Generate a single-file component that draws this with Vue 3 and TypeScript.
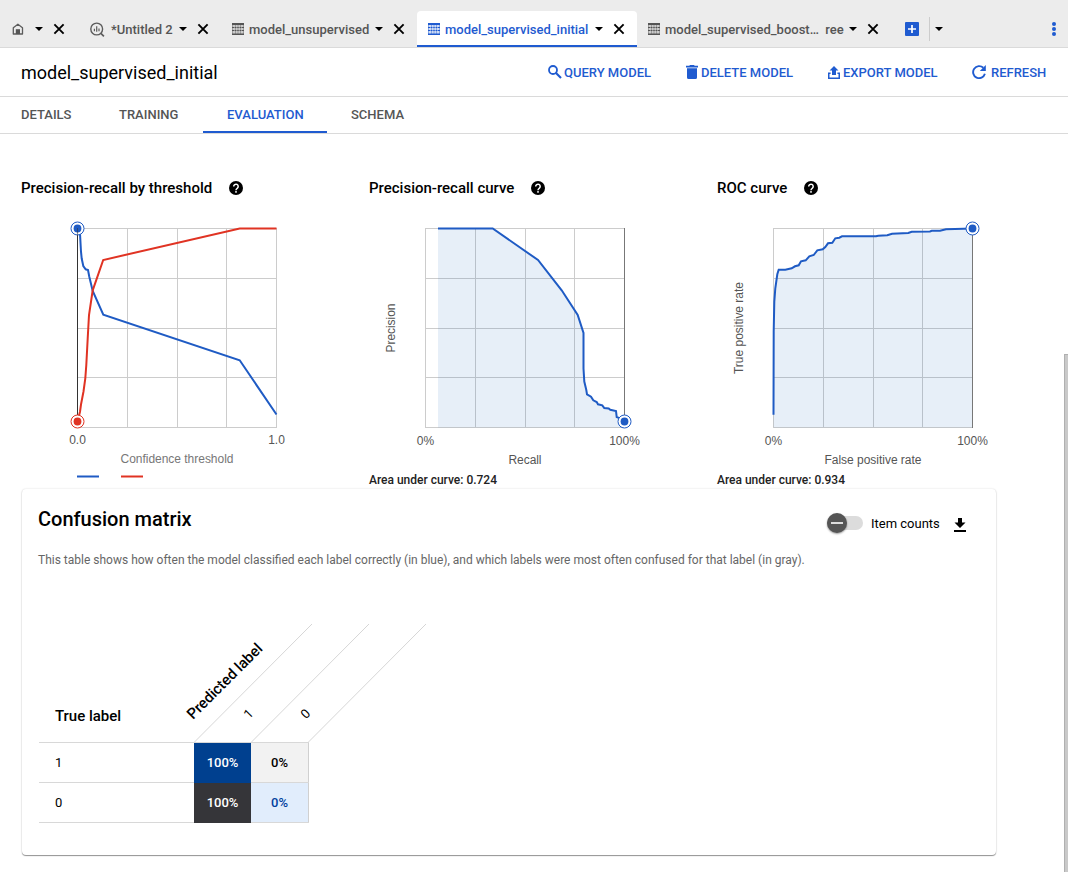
<script setup lang="ts">
interface Tab { kind: string; label: string; width: number; active?: boolean }
interface Marker { x: number; y: number; color: string }
interface Line { color: string; points: string }
interface Chart {
  title: string; x: number; axisX: number; lines: Line[]; area?: string; markers: Marker[]
  min: string; max: string; xLabel: string; xWidth: number; yLabel?: string; yWidth?: number; auc?: string
}

const blue = '#1f5bc4'
const red = '#e03323'

const tabs: Tab[] = [
  { kind: 'home', label: '', width: 77 },
  { kind: 'query', label: '*Untitled 2', width: 144 },
  { kind: 'model', label: 'model_unsupervised', width: 196 },
  { kind: 'model', label: 'model_supervised_initial', width: 220, active: true },
  { kind: 'model', label: 'model_supervised_boost…\u00a0 ree', width: 254 },
]

const views = ['DETAILS', 'TRAINING', 'EVALUATION', 'SCHEMA']

const recallCurve = '438,228.5 492.7,228.5 538,260 561.7,290.3 577.7,315 583.5,333 583.5,368.5 584.3,381.5 586.3,390 587,394.3 591,396.7 593.3,400.3 596.7,402 598,404.3 602.3,405.3 604.3,408 608.7,408.5 610.3,409.7 616,411 616.7,417 618.7,417.8 624.5,421.5'
const rocCurve = '773.5,414.7 773.7,331.7 774.3,301.7 775.3,288.3 777.3,274.3 778.7,269.7 785.3,269.7 791.7,268.3 795,266.3 798.7,265.3 801,261.3 805.7,260.3 809.3,256.3 813.7,255 817.3,250.3 822.7,249.3 825.3,247 828,243.3 832.3,242.7 835.3,238.3 839.3,237.7 842,236.3 876,236.3 878.3,235.7 887.3,235.3 892,233.7 908.3,233 911.7,231.7 930,231.5 931.7,230.8 940,230.8 946,229.3 955,229 972.5,228.5'

const charts: Chart[] = [
  {
    title: 'Precision-recall by threshold', x: 21, axisX: 77.5,
    lines: [
      { color: blue, points: '77.5,228.5 80,233.5 81,251.7 81.7,258.5 83.3,266 85.7,269.3 88,270 89.3,276.7 92.7,291 103.3,314.7 239.7,360.3 276.5,414.5' },
      { color: red, points: '77.5,421.5 80,411.7 81,404.5 83.5,391.5 85.3,378.3 86.3,365 87.7,338.5 89,315 92.7,290.3 103.2,260 239.7,228.5 276.5,228.5' },
    ],
    markers: [{ x: 77.5, y: 228.5, color: blue }, { x: 77.5, y: 421.5, color: red }],
    min: '0.0', max: '1.0', xLabel: 'Confidence threshold', xWidth: 113,
  },
  {
    title: 'Precision-recall curve', x: 369, axisX: 624.5,
    lines: [{ color: blue, points: recallCurve }],
    area: `438,427.5 ${recallCurve} 624.5,427.5`,
    markers: [{ x: 624.5, y: 421.5, color: blue }],
    min: '0%', max: '100%', xLabel: 'Recall', xWidth: 33, yLabel: 'Precision', yWidth: 49, auc: '0.724',
  },
  {
    title: 'ROC curve', x: 717, axisX: 972.5,
    lines: [{ color: blue, points: rocCurve }],
    area: `773.5,427.5 ${rocCurve} 972.5,427.5`,
    markers: [{ x: 972.5, y: 228.5, color: blue }],
    min: '0%', max: '100%', xLabel: 'False positive rate', xWidth: 97, yLabel: 'True positive rate', yWidth: 92, auc: '0.934',
  },
]

const gridX = [0, 50, 100, 149, 199]
const gridY = [228.5, 278.5, 328.5, 377.5, 427.5]

const rows = [
  { label: '1', cells: [{ text: '100%', tone: 'navy' }, { text: '0%', tone: 'pale' }] },
  { label: '0', cells: [{ text: '100%', tone: 'dark' }, { text: '0%', tone: 'sky' }] },
]
</script>

<template>
  <div class="page">
    <nav class="tabbar">
      <div v-for="(tab, i) in tabs" :key="i" class="tab" :class="[tab.kind, { active: tab.active }]" :style="{ width: tab.width + 'px' }">
        <svg v-if="tab.kind === 'home'" width="12" height="12" viewBox="0 0 12 12">
          <path d="M1.3 11V4.8L5.9 1.2l4.6 3.6V11z" fill="none" stroke="#5c5c5c" stroke-width="1.3" stroke-linejoin="round" />
          <path d="M3.8 11V6.2h4.2V11z" fill="#555" />
        </svg>
        <svg v-else-if="tab.kind === 'query'" width="15" height="15" viewBox="0 0 15 15" fill="none" stroke="#5c5c5c">
          <circle cx="6.7" cy="7" r="5.9" stroke-width="1.4" />
          <path d="M4.4 6.8v2.4M6.7 4.2v5.6M9 6.6v2.6" stroke-width="1.2" />
          <path d="M10.9 11.3l3 3" stroke-width="1.7" />
        </svg>
        <svg v-else width="12" height="12" viewBox="0 0 12 12" fill="currentColor">
          <path d="M0 0h12v2H0zM0 11h12v1H0z" />
          <path d="M0 2h12v9H0z" opacity=".22" />
          <path d="M0 4h12v1H0zM0 7h12v1H0zM0 10h12v1H0z" opacity=".5" />
          <path d="M0 4h2v1H0zM3 4h1v1H3zM5.5 4h1v1h-1zM8 4h1v1H8zM10 4h2v1h-2zM0 7h2v1H0zM3 7h1v1H3zM5.5 7h1v1h-1zM8 7h1v1H8zM10 7h2v1h-2z" />
          <path d="M0 2h1v9H0zM11 2h1v9h-1zM3 2h1v9H3zM5.5 2h1v9h-1zM8 2h1v9H8z" opacity=".4" />
        </svg>
        <span v-if="tab.label" class="tab-label">{{ tab.label }}</span>
        <span class="slot"><i class="caret" /></span>
        <span class="slot">
          <svg width="12" height="12" viewBox="0 0 12 12"><path d="M1.4 1.4l9.2 9.2M10.6 1.4l-9.2 9.2" stroke="#000" stroke-width="1.9" /></svg>
        </span>
      </div>
      <svg class="plus" width="14" height="14" viewBox="0 0 14 14">
        <rect width="14" height="14" rx="1" fill="#1f5bd0" />
        <path d="M7 3v8M3 7h8" stroke="#fff" stroke-width="1.7" />
      </svg>
      <span class="divider" />
      <i class="caret" />
      <svg class="dots" width="4" height="14" viewBox="0 0 4 14" fill="#1f5bd0">
        <circle cx="2" cy="2" r="2" /><circle cx="2" cy="7" r="2" /><circle cx="2" cy="12" r="2" />
      </svg>
    </nav>

    <header class="titlebar">
      <h1>model_supervised_initial</h1>
      <div class="actions">
        <button class="query-btn">
          <svg width="14" height="14" viewBox="0 0 14 14" fill="none" stroke="currentColor"><circle cx="5" cy="5" r="4" stroke-width="1.8" /><path d="M8 8l5 5" stroke-width="2.1" /></svg>
          <span>QUERY MODEL</span>
        </button>
        <button class="delete-btn">
          <svg width="12" height="14" viewBox="0 0 12 14" fill="currentColor"><path d="M0 .8h3.3L4 0h4l.7.8H12v1.6H0zM1 3.2h10v9.3Q11 14 9.5 14h-7Q1 14 1 12.5z" /></svg>
          <span>DELETE MODEL</span>
        </button>
        <button class="export-btn">
          <svg width="12" height="13" viewBox="0 0 12 13" fill="currentColor"><path d="M6 0l4.5 4.5H8V9H4V4.5H1.5zM0 6.5h2.6V8H1.5v3.5h9V8H9.4V6.5H12V13H0z" /></svg>
          <span>EXPORT MODEL</span>
        </button>
        <button class="refresh-btn">
          <svg width="14" height="14" viewBox="0 0 14 14" fill="none"><path d="M11.3 2.8A6 6 0 1 0 12.9 8.8" stroke="currentColor" stroke-width="1.9" /><path d="M13.8 0v6H7.8z" fill="currentColor" /></svg>
          <span>REFRESH</span>
        </button>
      </div>
    </header>

    <nav class="views">
      <a v-for="v in views" :key="v" :class="[v.toLowerCase(), { on: v === 'EVALUATION' }]"><span>{{ v }}</span></a>
    </nav>

    <div class="body">
      <main>
        <section class="charts">
          <article v-for="(c, i) in charts" :key="c.title">
            <h2>
              <span>{{ c.title }}</span>
              <svg width="14" height="14" viewBox="0 0 14 14">
                <circle cx="7" cy="7" r="7" />
                <path d="M4.7 5.5a2.25 2.25 0 1 1 3.5 1.8Q7 8.1 7 9.2" fill="none" stroke="#fff" stroke-width="1.5" />
                <rect x="6.2" y="10.1" width="1.6" height="1.6" fill="#fff" />
              </svg>
            </h2>
            <svg class="plot" width="348" height="291" :viewBox="`${c.x} 198 348 291`">
              <g stroke="#ccc" stroke-width="1">
                <line v-for="g in gridX" :key="g" :x1="c.x + 56.5 + g" :x2="c.x + 56.5 + g" y1="228" y2="428" />
                <line v-for="g in gridY" :key="g" :x1="c.x + 56" :x2="c.x + 256" :y1="g" :y2="g" />
              </g>
              <polygon v-if="c.area" :points="c.area" fill="#246bc0" fill-opacity=".11" />
              <polyline v-for="l in c.lines" :key="l.color" :points="l.points" fill="none" :stroke="l.color" stroke-width="2" />
              <line :x1="c.axisX" :x2="c.axisX" y1="228" :y2="i === 0 ? 422 : 428" :stroke="i === 0 ? '#333' : '#777'" />
              <g v-for="m in c.markers" :key="m.color">
                <circle :cx="m.x" :cy="m.y" r="6.5" fill="#fff" :stroke="m.color" stroke-width="1" />
                <circle :cx="m.x" :cy="m.y" r="3.9" :fill="m.color" />
              </g>
              <line v-if="i === 0" x1="77.5" x2="77.5" y1="228" y2="236" stroke="#333" stroke-opacity=".55" />
              <g class="axis" text-anchor="middle">
                <text :x="c.x + 56.5" :y="i === 0 ? 444 : 445">{{ c.min }}</text>
                <text :x="c.x + 255.5" :y="i === 0 ? 444 : 445">{{ c.max }}</text>
                <text :x="c.x + 156" :y="i === 0 ? 463 : 464" :textLength="c.xWidth" :class="{ light: i === 0 }">{{ c.xLabel }}</text>
                <text v-if="c.yLabel" :transform="`translate(${c.x + 26} 328) rotate(-90)`" :textLength="c.yWidth">{{ c.yLabel }}</text>
              </g>
              <g v-if="i === 0" stroke-width="2">
                <line x1="77" x2="99" y1="476.5" y2="476.5" :stroke="blue" />
                <line x1="121" x2="143" y1="476.5" y2="476.5" :stroke="red" />
              </g>
              <text v-if="c.auc" class="auc" :x="c.x" y="484" textLength="128">Area under curve: {{ c.auc }}</text>
            </svg>
          </article>
        </section>

        <section class="card">
          <div class="card-head">
            <h3>Confusion matrix</h3>
            <div class="toggle"><span class="knob" /></div>
            <span class="counts">Item counts</span>
            <svg class="download" width="12" height="14" viewBox="0 0 12 14"><path d="M4 0h4v4.5h3.5L6 10 .5 4.5H4zM0 12h12v2H0z" /></svg>
          </div>
          <p>This table shows how often the model classified each label correctly (in blue), and which labels were most often confused for that label (in gray).</p>
          <div class="matrix">
            <svg width="400" height="119" viewBox="39 624 400 119">
              <path d="M194 742.5L312 624M251 742.5L369 624M308 742.5L426 624" stroke="#d6d6d6" />
              <text class="head" x="55" y="721" textLength="66">True label</text>
              <text class="head" transform="translate(193 720) rotate(-45)" textLength="99.5">Predicted label</text>
              <text class="col" transform="translate(249 719.5) rotate(-45)">1</text>
              <text class="col" transform="translate(306 719.5) rotate(-45)">0</text>
            </svg>
            <div v-for="r in rows" :key="r.label" class="row">
              <span class="row-label">{{ r.label }}</span>
              <span v-for="(cell, i) in r.cells" :key="i" class="cell" :class="cell.tone">{{ cell.text }}</span>
            </div>
          </div>
        </section>
      </main>
      <div class="rail"><div class="thumb" /></div>
    </div>
  </div>
</template>

<style>
html, body { background: #fff; overflow: hidden; }
</style>

<style scoped>
* { box-sizing: border-box; }
.page { width: 1068px; height: 872px; overflow: hidden; display: flex; flex-direction: column; font-family: Roboto, "Liberation Sans", sans-serif; color: #000; background: #fff; }
svg { display: block; flex: none; }
.tabbar { height: 48px; flex: none; display: flex; align-items: center; background: #ececec; border-bottom: 1px solid #dadada; padding-top: 11px; }
.tab { height: 36px; flex: none; display: flex; align-items: center; padding: 0 8px 0 11px; color: #555; border-radius: 4px 4px 0 0; }
.tab.home { padding-left: 12px; }
.home .slot:nth-of-type(1) { margin-left: 5px; }
.tab.query { padding-left: 13px; }
.tab.active { background: #fff; color: #1f5bd0; border-bottom: 2px solid #1f5bd0; padding-top: 2px; }
.tab-label { flex: 1; min-width: 0; margin-left: 5px; font-size: 13px; font-weight: 500; white-space: nowrap; }
.query .tab-label { margin-left: 6px; }
.slot { width: 20px; flex: none; display: flex; justify-content: center; }
.caret { width: 0; height: 0; border: 4px solid transparent; border-top-color: #000; border-bottom: 0; }
.plus { margin-left: 14px; }
.divider { width: 1px; height: 24px; margin: 0 5px 0 10px; background: #ccc; }
.dots { margin-left: auto; margin-right: 12px; }
.titlebar { height: 49px; flex: none; border-bottom: 1px solid #dadada; display: flex; align-items: center; justify-content: space-between; padding: 0 22px 0 21px; }
h1 { margin: 0; font-size: 18px; font-weight: 400; }
.actions { display: flex; }
button { border: 0; padding: 0; background: none; display: flex; align-items: center; color: #1f5bd0; font: 500 13px Roboto, sans-serif; white-space: nowrap; text-align: left; }
.query-btn { width: 138px; gap: 2px; }
.delete-btn { width: 142px; gap: 3px; }
.export-btn { width: 144px; gap: 3px; }
.refresh-btn { width: 74px; gap: 5px; }
.views { height: 37px; flex: none; display: flex; border-bottom: 1px solid #dadada; }
.views a { padding: 10px 24px 0; height: 36px; font-size: 13px; font-weight: 500; line-height: 16px; color: #555; white-space: nowrap; }
.views .details { width: 95px; padding-left: 21px; }
.views .training { width: 108px; }
.views .evaluation { width: 124px; }
.views a.on { color: #1f5bd0; border-bottom: 2px solid #1f5bd0; }
.body { flex: 1; display: flex; min-height: 0; }
main { flex: 1; padding: 44px 0 0 21px; }
.charts { display: grid; grid-template-columns: repeat(3, 348px); width: 1040px; }
h2 { margin: 0; height: 20px; display: flex; align-items: center; gap: 17px; font-size: 15px; font-weight: 500; line-height: 20px; white-space: nowrap; }
.plot { overflow: visible; }
.axis text { font: 12px "Liberation Sans", Arial, sans-serif; fill: #555; }
.axis text.light { fill: #777; }
.auc { font-size: 12px; font-weight: 500; fill: #222; }
.card { width: 974px; height: 366px; margin-left: 1px; border-radius: 4px; padding: 17px 30px 0 16px; background: #fff; box-shadow: 0 1px 1px rgba(0,0,0,.4), 0 0 2px rgba(0,0,0,.16); }
.card-head { height: 34px; display: flex; align-items: center; }
h3 { margin: 0 auto 8px 0; font-size: 20px; font-weight: 500; line-height: 26px; }
.toggle { width: 36px; height: 14px; border-radius: 7px; background: #dcdcdc; display: flex; align-items: center; }
.knob { width: 20px; height: 20px; border-radius: 50%; background: #555; box-shadow: 0 1px 2px rgba(0,0,0,.4); display: flex; align-items: center; justify-content: center; flex: none; }
.knob::before { content: ""; width: 12px; height: 2px; background: #ddd; }
.counts { width: 69px; margin: 0 14px 0 8px; font-size: 13px; white-space: nowrap; }
.download { margin-top: 3px; }
p { margin: 11px 0 0; font-size: 12px; line-height: 18px; color: #666; white-space: nowrap; }
.matrix { margin: 55px 0 0 1px; }
.head { font-size: 15px; font-weight: 500; }
.col { font-size: 13px; }
.row { width: 270px; height: 40px; display: flex; border-bottom: 1px solid #d8d8d8; font-size: 13px; line-height: 39px; }
.row:first-of-type { height: 41px; border-top: 1px solid #d8d8d8; margin-top: -1px; }
.row-label { width: 155px; padding-left: 16px; }
.cell { width: 58px; text-align: center; font-weight: 500; border-right: 1px solid #d0d0d0; }
.cell.navy, .cell.dark { width: 57px; color: #fff; border: 0; height: 40px; }
.navy { background: #00408f; }
.dark { background: #353539; }
.pale { background: #f2f2f2; }
.sky { background: #e1edfc; color: #00419e; }
.rail { width: 4px; flex: none; padding-top: 220px; }
.thumb { height: 518px; background: #c9c9c9; border: 1px solid #b0b0b0; border-width: 1px 0 0 1px; }
</style>
